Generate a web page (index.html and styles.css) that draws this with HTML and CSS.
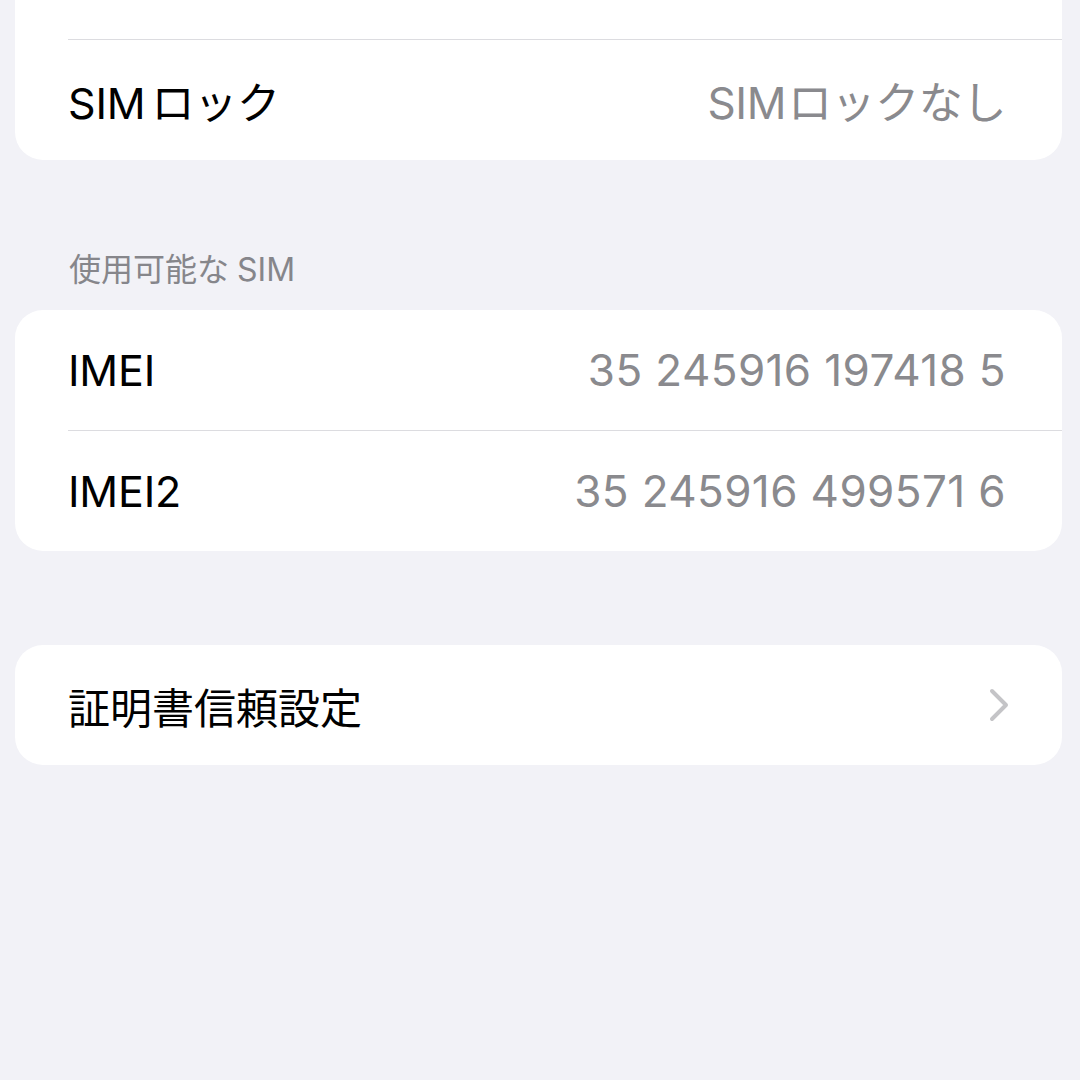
FILE: index.html
```html
<!DOCTYPE html>
<html lang="ja">

<head>
  <meta charset="UTF-8">
  <title>情報</title>
  <link rel="stylesheet" href="styles.css">
</head>

<body>
  <div class="page">

    <!-- 上のグループ（先頭行は画面外） -->
    <div class="group group-top">
      <div class="row">
        <div class="row-body"><span class="label"></span></div>
      </div>
      <div class="row">
        <div class="row-body">
          <span class="label">SIM<span class="gap"></span>ロック</span>
          <span class="value">SIM<span class="gap"></span>ロックなし</span>
        </div>
      </div>
    </div>

    <div class="section-title">使用可能な<span class="gap"></span>SIM</div>

    <div class="group">
      <div class="row">
        <div class="row-body">
          <span class="label">IMEI</span>
          <span class="value num">35 245916 197418 5</span>
        </div>
      </div>
      <div class="row">
        <div class="row-body">
          <span class="label">IMEI2</span>
          <span class="value num">35 245916 499571 6</span>
        </div>
      </div>
    </div>

    <div class="group group-link">
      <div class="row">
        <div class="row-body">
          <span class="label cjk">証明書信頼設定</span>
          <svg class="chevron" width="24" height="34" viewBox="0 0 24 34">
            <polyline points="4,3 18,17 4,31" fill="none" stroke="#c4c4c7" stroke-width="4" stroke-linecap="round" stroke-linejoin="round"/>
          </svg>
        </div>
      </div>
    </div>

  </div>
</body>

</html>
```

FILE: styles.css
```css
body {
  margin: 0;
  padding: 0;
  background-color: #f2f2f7;
  font-family: Inter, "Noto Sans CJK JP", sans-serif;
  color: #000;
}

.page {
  height: 1080px;
  overflow: hidden;
  padding: 0 18px 0 15px;
}

.group {
  background-color: #fff;
  border-radius: 28px;
  overflow: hidden;
}

/* 一番上のグループは上にはみ出している */
.group-top {
  margin-top: -81px;
}

.group-link {
  margin-top: 94px;
}

.row {
  padding-left: 53px;
}

.row-body {
  display: flex;
  justify-content: space-between;
  align-items: center;
  height: 120px;
  padding-right: 56px;
}

.row + .row .row-body {
  border-top: 1px solid #dcdce0;
}

.label {
  font-size: 43px;
  letter-spacing: -0.2px;
}

.label.cjk {
  font-size: 42px;
  letter-spacing: 0;
}

.value {
  font-size: 44px;
  color: #8a8a8e;
  letter-spacing: -0.4px;
}

.value .gap {
  width: 2px;
}

.value.num {
  letter-spacing: 0.4px;
}

/* 英字と仮名の間のすき間 */
.gap {
  display: inline-block;
  width: 6px;
}

.chevron {
  margin-right: -6px;
}

.section-title {
  padding: 92px 0 22px 54px;
  line-height: 36px;
  font-size: 32px;
  color: #86868b;
}

.section-title .gap {
  width: 8px;
}
```
